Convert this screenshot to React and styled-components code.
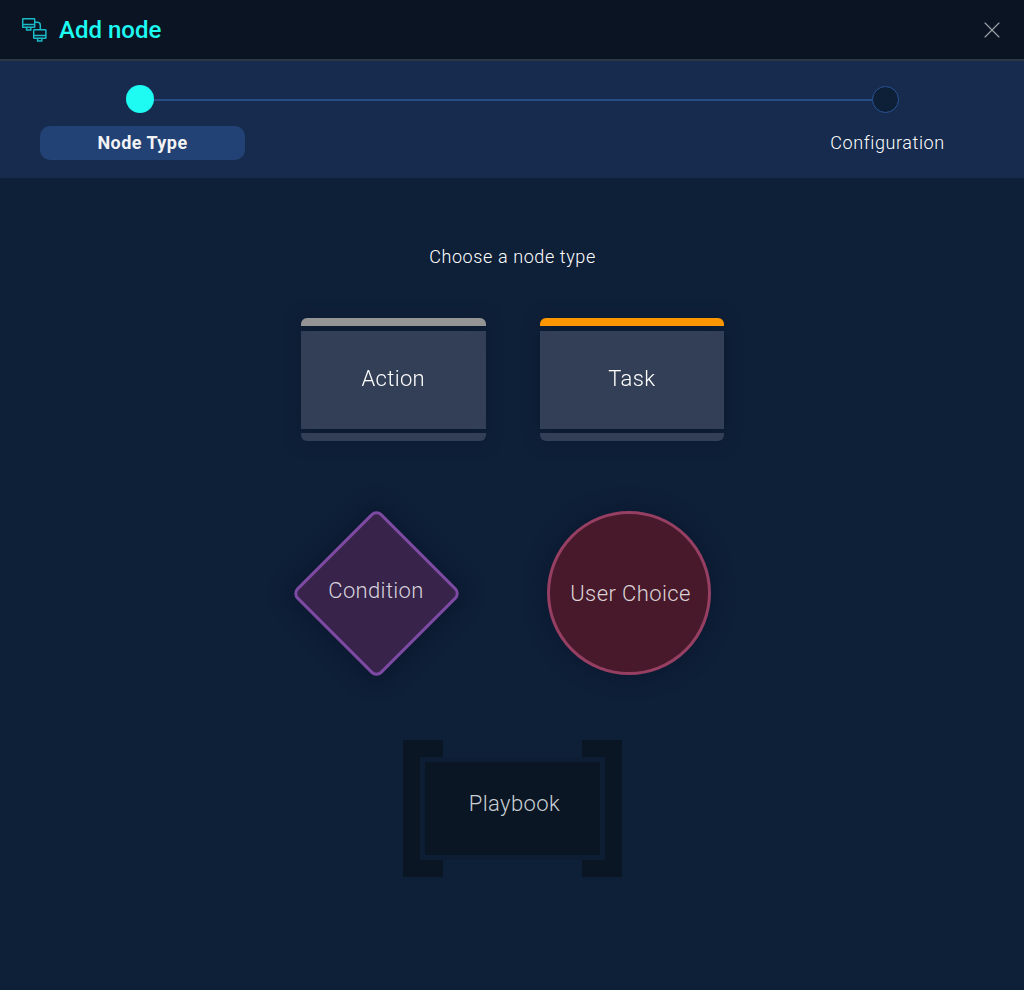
import styled, { createGlobalStyle } from "styled-components";
import { X } from "lucide-react";

const GlobalStyle = createGlobalStyle`
  html, body {
    margin: 0;
    padding: 0;
    background: #0e1f38;
  }
  * {
    box-sizing: border-box;
  }
`;

const Page = styled.div`
  width: 1024px;
  height: 990px;
  overflow: hidden;
  display: flex;
  flex-direction: column;
  background: #0e1f38;
  font-family: Roboto, "Liberation Sans", sans-serif;
  color: #fff;
`;

const Header = styled.header`
  height: 61px;
  flex: none;
  display: flex;
  align-items: center;
  padding: 0 22px;
  background: #0a1422;
  border-bottom: 2px solid #2c3644;
`;

const Title = styled.h1`
  margin: 0 0 0 12px;
  font-size: 24px;
  line-height: 26px;
  font-weight: 500;
  color: #1dfbf3;
  flex: 1;
`;

const CloseButton = styled.button`
  display: flex;
  padding: 0;
  margin-right: -4px;
  border: 0;
  background: none;
  color: #9a9fa8;
`;

const Stepper = styled.section`
  height: 117px;
  flex: none;
  background: #162b4d;
  padding-top: 24px;
`;

const Track = styled.div`
  display: flex;
  align-items: center;
  height: 28px;
  padding: 0 125px 0 126px;
`;

const Dot = styled.span`
  flex: none;
  width: ${({ $active }) => ($active ? "28px" : "27px")};
  height: ${({ $active }) => ($active ? "28px" : "27px")};
  border-radius: 50%;
  background: ${({ $active }) => ($active ? "#1dfbf3" : "#0e1f38")};
  border: ${({ $active }) => ($active ? "0" : "1.5px solid #2a5496")};
`;

const Line = styled.span`
  flex: 1;
  height: 2px;
  margin-top: 1px;
  background: #264b85;
`;

const Labels = styled.div`
  display: flex;
  justify-content: space-between;
  margin-top: 13px;
  padding: 0 34px 0 40px;
`;

const StepLabel = styled.div`
  width: 205px;
  height: 34px;
  padding-bottom: 2px;
  border-radius: 10px;
  display: flex;
  align-items: center;
  justify-content: center;
  font-size: 18px;
  letter-spacing: ${({ $active }) => ($active ? "0.45px" : "0.6px")};
  font-weight: ${({ $active }) => ($active ? 700 : 300)};
  background: ${({ $active }) => ($active ? "#224174" : "transparent")};
  color: ${({ $active }) => ($active ? "#f2f3f5" : "#fff")};
`;

const Body = styled.main`
  flex: 1;
  display: flex;
  flex-direction: column;
  align-items: center;
  padding: 67px 0 0 1px;
`;

const Prompt = styled.p`
  margin: 0;
  font-size: 18px;
  font-weight: 300;
  line-height: 24px;
  letter-spacing: 0.6px;
  color: #fff;
`;

const TaskRow = styled.div`
  display: flex;
  gap: 54px;
  margin-top: 49px;
`;

const TaskCard = styled.button`
  width: 184.5px;
  height: 123px;
  padding: 0;
  border: 0;
  background: none;
  display: flex;
  flex-direction: column;
  font: inherit;
  color: #fff;
  filter: drop-shadow(0 0 8px rgba(10, 22, 42, 0.55));
`;

const TopStrip = styled.span`
  height: 8px;
  border-radius: 6px 6px 0 0;
  background: ${({ $color }) => $color};
`;

const CardFace = styled.span`
  height: 98px;
  margin-top: 5px;
  padding-bottom: 3px;
  background: #333f56;
  display: flex;
  align-items: center;
  justify-content: center;
  font-size: 22px;
  font-weight: 300;
  letter-spacing: 0.35px;
`;

const BottomStrip = styled.span`
  height: 8px;
  margin-top: 4px;
  border-radius: 0 0 6px 6px;
  background: #333f56;
`;

const DecisionRow = styled.div`
  display: flex;
  align-items: center;
  gap: 88px;
  margin-top: 69px;
  padding-right: 21px;
`;

const DiamondSlot = styled.button`
  width: 166px;
  height: 166px;
  padding: 0;
  border: 0;
  background: none;
  display: grid;
  place-items: center;
  font: inherit;
`;

const Diamond = styled.span`
  grid-area: 1 / 1;
  width: 121px;
  height: 121px;
  border-radius: 8px;
  transform: rotate(45deg);
  background: #38234a;
  border: 3px solid #7d4aa3;
  box-shadow: 0 0 16px 8px rgba(10, 22, 42, 0.5);
`;

const ShapeLabel = styled.span`
  grid-area: 1 / 1;
  z-index: 1;
  padding-bottom: 6px;
  font-size: 22px;
  font-weight: 300;
  letter-spacing: 0.35px;
  color: #d6d2dc;
`;

const Circle = styled.button`
  width: 164px;
  height: 164px;
  padding: 0 0 0 3px;
  border-radius: 50%;
  background: #47192a;
  border: 3px solid #963f62;
  box-shadow: 0 0 18px 4px rgba(10, 22, 42, 0.5);
  font: inherit;
  font-size: 22px;
  font-weight: 300;
  letter-spacing: 0.4px;
  color: #dcd2d8;
`;

const Playbook = styled.button`
  position: relative;
  width: 219px;
  height: 137px;
  margin-top: 64px;
  padding: 0;
  border: 0;
  background: none;
  display: flex;
  align-items: center;
  justify-content: center;
  font: inherit;

  &::before,
  &::after {
    content: "";
    position: absolute;
    top: 0;
    bottom: 0;
    width: 40px;
    background: #0a1623;
  }
  &::before {
    left: 0;
  }
  &::after {
    right: 0;
  }
`;

const PlaybookFace = styled.span`
  position: relative;
  z-index: 1;
  width: 185px;
  height: 103px;
  padding: 0 0 10px 4px;
  background: #0a1623;
  border: 5px solid #0d1d33;
  display: flex;
  align-items: center;
  justify-content: center;
  font-size: 22px;
  font-weight: 300;
  letter-spacing: 0.4px;
  color: #ccd0d6;
`;

// two linked monitors
const NodesIcon = () => (
  <svg width="25" height="24" viewBox="0 0 25 24" fill="none" stroke="#1bb9c6" strokeWidth="1.5">
    <rect x="0.7" y="0.7" width="12" height="8.6" rx="0.6" />
    <path d="M0.7 6.6h12M4.6 9.3v2.6h4.2V9.3" />
    <path d="M12.7 4.2h2.6q3 0 3 3v4.4" />
    <rect x="11.7" y="11.7" width="12.2" height="8.6" rx="0.6" />
    <path d="M11.7 17.6h12.2M15.6 20.3v2.7h4.2v-2.7" />
  </svg>
);

export default function App() {
  return (
    <Page>
      <GlobalStyle />
      <Header>
        <NodesIcon />
        <Title>Add node</Title>
        <CloseButton aria-label="Close">
          <X size={28} strokeWidth={1} />
        </CloseButton>
      </Header>
      <Stepper>
        <Track>
          <Dot $active />
          <Line />
          <Dot />
        </Track>
        <Labels>
          <StepLabel $active>Node Type</StepLabel>
          <StepLabel>Configuration</StepLabel>
        </Labels>
      </Stepper>
      <Body>
        <Prompt>Choose a node type</Prompt>
        <TaskRow>
          <TaskCard>
            <TopStrip $color="#949494" />
            <CardFace>Action</CardFace>
            <BottomStrip />
          </TaskCard>
          <TaskCard>
            <TopStrip $color="#fb9600" />
            <CardFace>Task</CardFace>
            <BottomStrip />
          </TaskCard>
        </TaskRow>
        <DecisionRow>
          <DiamondSlot>
            <Diamond />
            <ShapeLabel>Condition</ShapeLabel>
          </DiamondSlot>
          <Circle>User Choice</Circle>
        </DecisionRow>
        <Playbook>
          <PlaybookFace>Playbook</PlaybookFace>
        </Playbook>
      </Body>
    </Page>
  );
}
